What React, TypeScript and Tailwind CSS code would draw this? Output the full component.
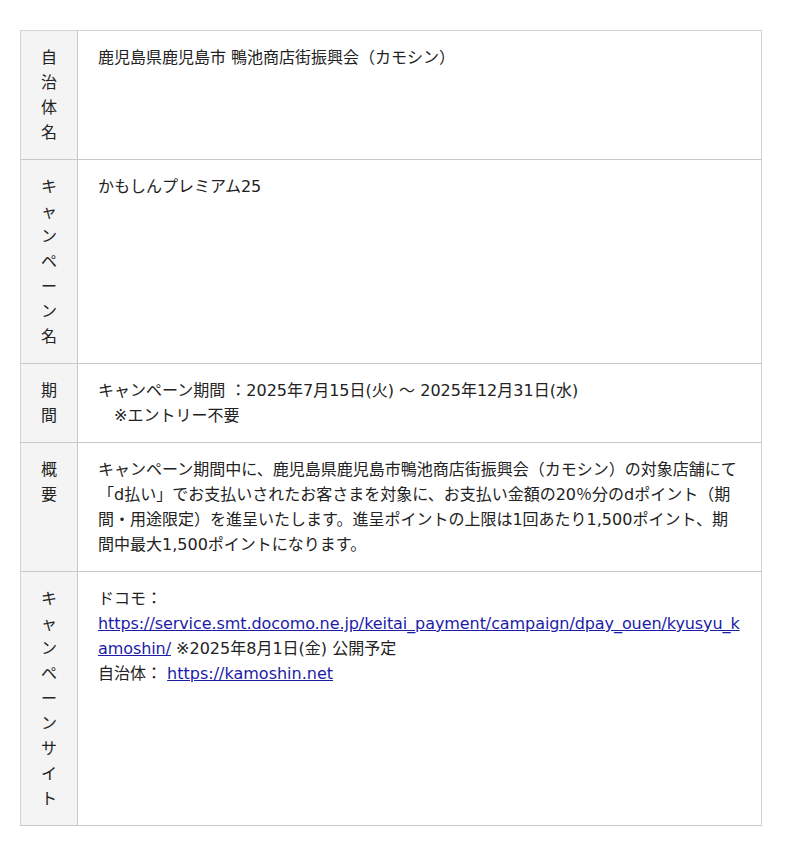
export default function App() {
  const rows: { label: string; content: React.ReactNode }[] = [
    { label: "自治体名", content: <p>鹿児島県鹿児島市 鴨池商店街振興会（カモシン）</p> },
    { label: "キャンペーン名", content: <p>かもしんプレミアム25</p> },
    {
      label: "期間",
      content: (
        <p>
          キャンペーン期間 ：2025年7月15日(火) 〜 2025年12月31日(水)
          <br />
          {"\u3000※エントリー不要"}
        </p>
      ),
    },
    {
      label: "概要",
      content: (
        <p>
          キャンペーン期間中に、鹿児島県鹿児島市鴨池商店街振興会（カモシン）の対象店舗にて「d払い」でお支払いされたお客さまを対象に、お支払い金額の20％分のdポイント（期間・用途限定）を進呈いたします。進呈ポイントの上限は1回あたり1,500ポイント、期間中最大1,500ポイントになります。
        </p>
      ),
    },
    {
      label: "キャンペーンサイト",
      content: (
        <p className="break-all">
          ドコモ：
          <br />
          <a href="#" className="text-[#1c1ca8] underline tracking-[-0.08px]">
            https://service.smt.docomo.ne.jp/keitai_payment/campaign/dpay_ouen/kyusyu_kamoshin/
          </a>{" "}
          ※2025年8月1日(金) 公開予定
          <br />
          自治体：{" "}
          <a href="#" className="text-[#1c1ca8] underline">
            https://kamoshin.net
          </a>
        </p>
      ),
    },
  ];

  return (
    <main
      className="min-h-screen bg-white pl-5 pt-[30px] text-[16px] leading-[25px] text-[#222]"
      style={{ fontFamily: '"DejaVu Sans", "Noto Sans CJK JP", sans-serif' }}
    >
      <table className="w-[742px] border-collapse border border-[#d4d4d4]">
        <tbody>
          {rows.map((r) => (
            <tr key={r.label} className="border-b border-[#c8c8c8]">
              <th className="w-[57px] border-r border-[#c8c8c8] bg-[#f4f4f4] py-[14px] align-top font-normal">
                {Array.from(r.label).map((c, i) => (
                  <div key={i} className="text-center">
                    {c}
                  </div>
                ))}
              </th>
              <td className="py-[14px] pl-5 pr-[21px] align-top">{r.content}</td>
            </tr>
          ))}
        </tbody>
      </table>
    </main>
  );
}
